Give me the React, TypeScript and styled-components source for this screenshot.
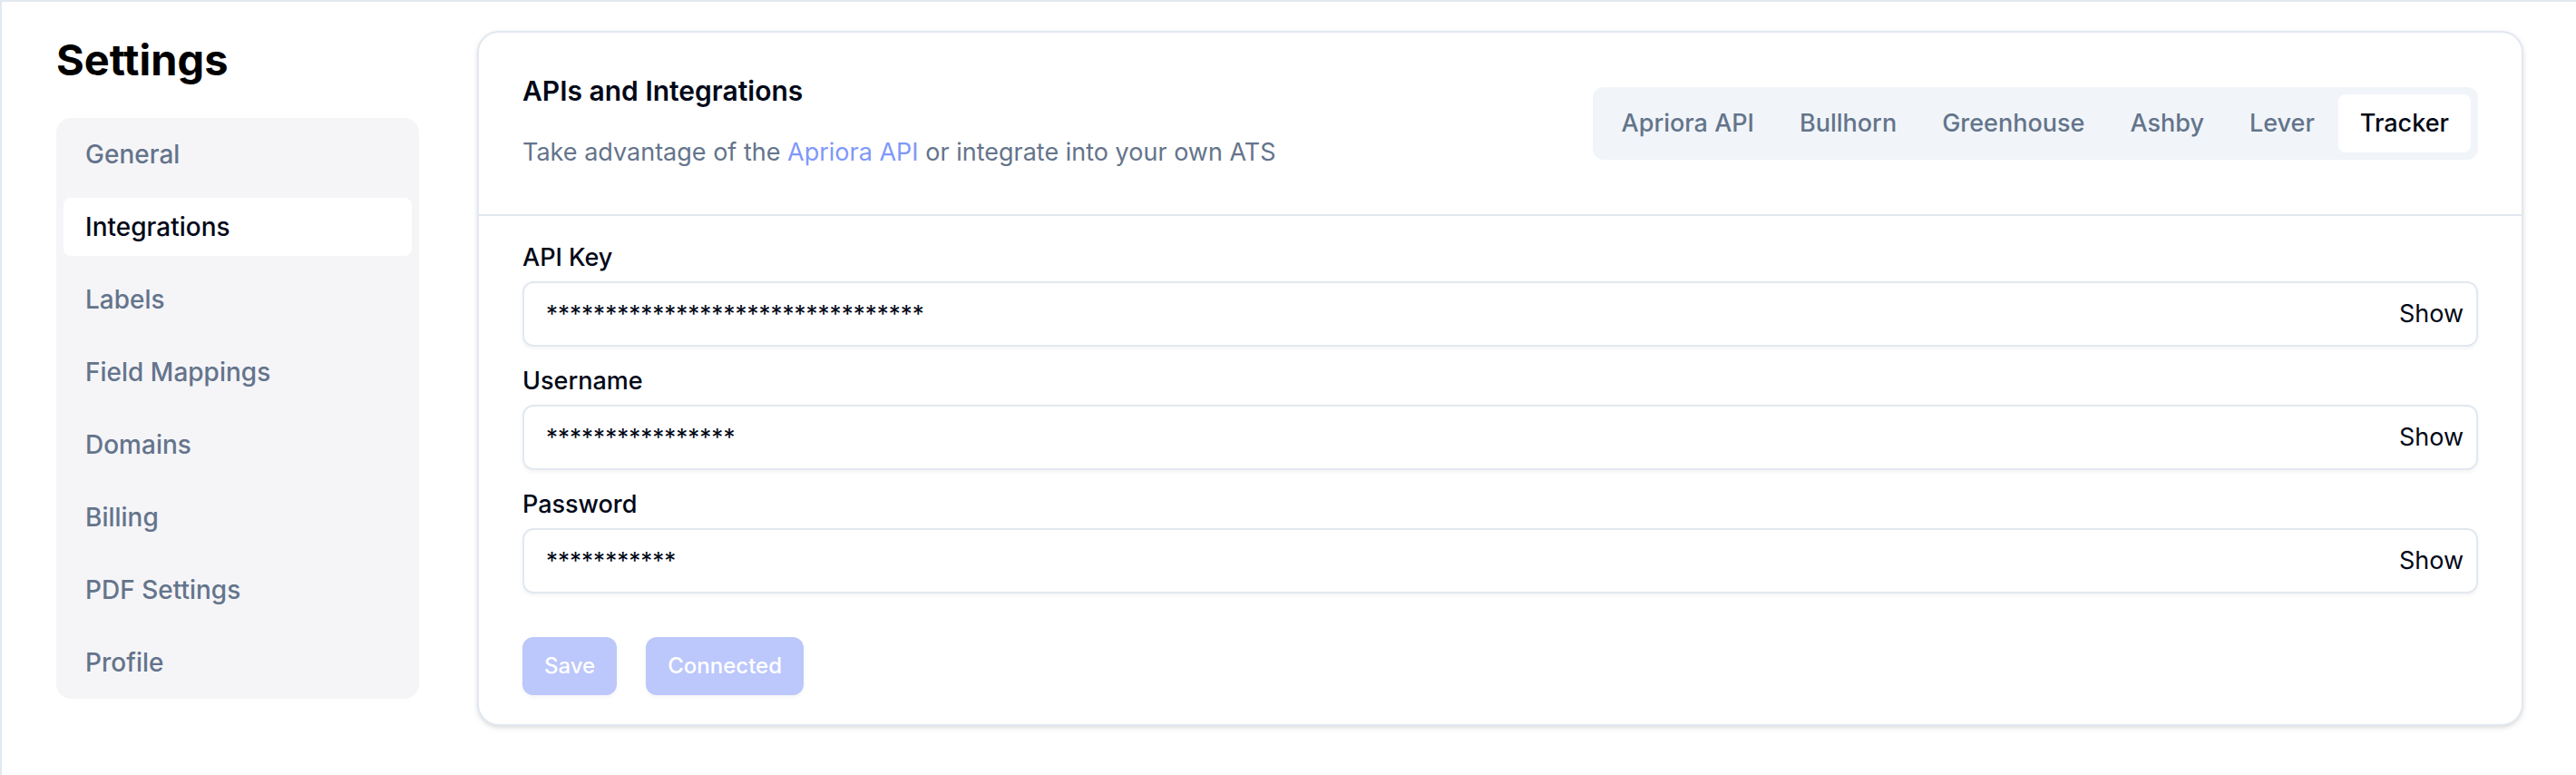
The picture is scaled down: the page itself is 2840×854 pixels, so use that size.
import React, { useState } from "react";
import styled, { createGlobalStyle } from "styled-components";

const colors = {
  ink: "#020817",
  muted: "#64748b",
  border: "#e2e8f0",
  panel: "#f5f5f8",
  tabs: "#f1f5f9",
  link: "#8098f9",
  primary: "#bcc7fb",
  white: "#ffffff",
};

const GlobalStyle = createGlobalStyle`
  *, *::before, *::after { box-sizing: border-box; }
  body {
    margin: 0;
    background: ${colors.white};
    color: ${colors.ink};
    font-family: Inter, "Liberation Sans", sans-serif;
    font-size: 27px;
    line-height: 40px;
    -webkit-font-smoothing: antialiased;
  }
  button, input { font: inherit; color: inherit; }
`;

const Page = styled.main`
  display: flex;
  align-items: flex-start;
  gap: 64px;
  min-height: 100vh;
  padding: 32px 58px 32px 60px;
  border-top: 2px solid ${colors.border};
  border-left: 2px solid ${colors.border};
`;

const Sidebar = styled.aside`
  display: flex;
  flex-direction: column;
  gap: 32px;
  flex: 0 0 400px;
`;

const PageTitle = styled.h1`
  margin: 0;
  color: #000000;
  font-size: 47px;
  font-weight: 700;
  line-height: 64px;
`;

const NavList = styled.nav`
  display: flex;
  flex-direction: column;
  gap: 16px;
  padding: 8px;
  border-radius: 16px;
  background: ${colors.panel};
`;

const NavLink = styled.a<{ $active: boolean }>`
  padding: 12px 24px;
  border-radius: 8px;
  background: ${({ $active }) => ($active ? colors.white : "transparent")};
  color: ${({ $active }) => ($active ? colors.ink : colors.muted)};
  font-size: 28px;
  font-weight: 500;
  text-decoration: none;
`;

const Card = styled.section`
  flex: 1;
  min-width: 0;
  border: 2px solid ${colors.border};
  border-radius: 24px;
  background: ${colors.white};
  box-shadow: 0 2px 6px rgba(0, 0, 0, 0.1), 0 2px 4px -2px rgba(0, 0, 0, 0.1);
`;

const CardHeader = styled.header`
  display: flex;
  align-items: center;
  justify-content: space-between;
  gap: 32px;
  padding: 48px;
  border-bottom: 2px solid ${colors.border};
`;

const Heading = styled.div`
  display: flex;
  flex-direction: column;
  gap: 32px;
`;

const CardTitle = styled.h2`
  margin: 0;
  font-size: 30px;
  font-weight: 600;
  line-height: 32px;
`;

const Description = styled.p`
  margin: 0;
  color: ${colors.muted};
`;

const TextLink = styled.a`
  color: ${colors.link};
  text-decoration: none;
`;

const TabList = styled.div`
  display: flex;
  gap: 2px;
  padding: 8px;
  border-radius: 12px;
  background: ${colors.tabs};
`;

const Tab = styled.button<{ $active: boolean }>`
  padding: 12px 24px;
  border: 0;
  border-radius: 8px;
  background: ${({ $active }) => ($active ? colors.white : "transparent")};
  color: ${({ $active }) => ($active ? colors.ink : colors.muted)};
  font-weight: 500;
  white-space: nowrap;
  cursor: pointer;
`;

const Form = styled.form`
  display: flex;
  flex-direction: column;
  gap: 24px;
  padding: 32px 48px;
`;

const Field = styled.div`
  display: flex;
  flex-direction: column;
  gap: 12px;
`;

const Label = styled.label`
  font-weight: 500;
  line-height: 28px;
`;

const InputFrame = styled.div`
  display: flex;
  align-items: center;
  height: 72px;
  padding: 0 14px 0 24px;
  border: 2px solid ${colors.border};
  border-radius: 12px;
  box-shadow: 0 2px 4px rgba(0, 0, 0, 0.05);
`;

const Input = styled.input`
  flex: 1;
  min-width: 0;
  height: 40px;
  padding: 0;
  border: 0;
  outline: 0;
  background: transparent;
  font-size: 26px;
`;

const ShowButton = styled.button`
  padding: 0;
  border: 0;
  background: transparent;
  cursor: pointer;
`;

const Actions = styled.div`
  display: flex;
  gap: 32px;
  padding-top: 24px;
`;

const ActionButton = styled.button`
  height: 64px;
  padding: 0 24px;
  border: 0;
  border-radius: 12px;
  background: ${colors.primary};
  color: ${colors.white};
  font-size: 24px;
  font-weight: 500;
  line-height: 32px;
  box-shadow: 0 2px 4px rgba(0, 0, 0, 0.05);
`;

const navItems = [
  "General",
  "Integrations",
  "Labels",
  "Field Mappings",
  "Domains",
  "Billing",
  "PDF Settings",
  "Profile",
];

const providers = ["Apriora API", "Bullhorn", "Greenhouse", "Ashby", "Lever", "Tracker"];

const credentials = [
  { id: "api-key", label: "API Key", length: 32 },
  { id: "username", label: "Username", length: 16 },
  { id: "password", label: "Password", length: 11 },
];

function CredentialField({ id, label, length }: { id: string; label: string; length: number }) {
  return (
    <Field>
      <Label htmlFor={id}>{label}</Label>
      <InputFrame>
        <Input id={id} type="text" defaultValue={"*".repeat(length)} spellCheck={false} />
        <ShowButton type="button" aria-controls={id}>
          Show
        </ShowButton>
      </InputFrame>
    </Field>
  );
}

export default function App() {
  const [section, setSection] = useState("Integrations");
  const [provider, setProvider] = useState("Tracker");

  return (
    <>
      <GlobalStyle />
      <Page>
        <Sidebar>
          <PageTitle>Settings</PageTitle>
          <NavList aria-label="Settings">
            {navItems.map((item) => (
              <NavLink
                key={item}
                href="#"
                $active={item === section}
                aria-current={item === section ? "page" : undefined}
                onClick={() => setSection(item)}
              >
                {item}
              </NavLink>
            ))}
          </NavList>
        </Sidebar>
        <Card>
          <CardHeader>
            <Heading>
              <CardTitle>APIs and Integrations</CardTitle>
              <Description>
                Take advantage of the <TextLink href="#">Apriora API</TextLink> or integrate into
                your own ATS
              </Description>
            </Heading>
            <TabList role="tablist">
              {providers.map((name) => (
                <Tab
                  key={name}
                  type="button"
                  role="tab"
                  aria-selected={name === provider}
                  $active={name === provider}
                  onClick={() => setProvider(name)}
                >
                  {name}
                </Tab>
              ))}
            </TabList>
          </CardHeader>
          <Form onSubmit={(event: React.FormEvent) => event.preventDefault()}>
            {credentials.map((field) => (
              <CredentialField key={field.id} {...field} />
            ))}
            <Actions>
              <ActionButton type="submit" disabled>
                Save
              </ActionButton>
              <ActionButton type="button" disabled>
                Connected
              </ActionButton>
            </Actions>
          </Form>
        </Card>
      </Page>
    </>
  );
}
